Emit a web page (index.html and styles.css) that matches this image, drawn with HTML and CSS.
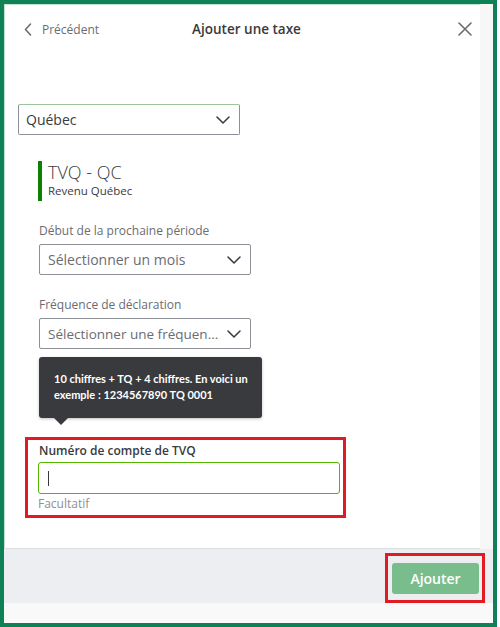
FILE: index.html
```html
<!DOCTYPE html>
<html lang="fr">

<head>
    <meta charset="UTF-8">
    <meta name="viewport" content="width=device-width, initial-scale=1.0">
    <title>Ajouter une taxe</title>

    <link rel="stylesheet" href="styles.css">
</head>

<body>

    <div class="frame">

        <div class="scroll">
            <div class="panel">

                <div class="header">
                    <a href="javascript:;" class="back">
                        <svg width="8" height="13" viewBox="0 0 8 13"><path d="M6.5 1 1.5 6.5 6.5 12" fill="none" stroke="#6b6c72" stroke-width="1.6" stroke-linecap="round" stroke-linejoin="round"/></svg>
                        <span>Précédent</span>
                    </a>
                    <h1>Ajouter une taxe</h1>
                    <a href="javascript:;" class="close">
                        <svg width="14" height="14" viewBox="0 0 14 14"><path d="M1 1 13 13M13 1 1 13" stroke="#6b6c72" stroke-width="1.6" stroke-linecap="round"/></svg>
                    </a>
                </div>

                <div class="select province">
                    <span>Québec</span>
                    <svg width="14" height="8" viewBox="0 0 14 8"><path d="M1 1 7 7 13 1" fill="none" stroke="#393a3d" stroke-width="1.5" stroke-linecap="round" stroke-linejoin="round"/></svg>
                </div>

                <div class="section">

                    <div class="agency">
                        <div class="agency-name">TVQ - QC</div>
                        <div class="agency-sub">Revenu Québec</div>
                    </div>

                    <div class="field">
                        <label>Début de la prochaine période</label>
                        <div class="select">
                            <span class="placeholder">Sélectionner un mois</span>
                            <svg width="14" height="8" viewBox="0 0 14 8"><path d="M1 1 7 7 13 1" fill="none" stroke="#393a3d" stroke-width="1.5" stroke-linecap="round" stroke-linejoin="round"/></svg>
                        </div>
                    </div>

                    <div class="field">
                        <label>Fréquence de déclaration</label>
                        <div class="select">
                            <span class="placeholder">Sélectionner une fréquen…</span>
                            <svg width="14" height="8" viewBox="0 0 14 8"><path d="M1 1 7 7 13 1" fill="none" stroke="#393a3d" stroke-width="1.5" stroke-linecap="round" stroke-linejoin="round"/></svg>
                        </div>
                    </div>

                </div>

                <div class="highlight account">
                    <div class="tooltip">10 chiffres + TQ + 4 chiffres. En voici un exemple : 1234567890 TQ 0001</div>
                    <label class="strong">Numéro de compte de TVQ</label>
                    <div class="input"><span class="caret"></span></div>
                    <div class="hint">Facultatif</div>
                </div>

            </div>
            <div class="track"></div>
        </div>

        <div class="footer">
            <div class="highlight btn-box">
                <button>Ajouter</button>
            </div>
        </div>

        <div class="bottom"></div>

    </div>

</body>

</html>
```

FILE: styles.css
```css
* {
    margin: 0;
    padding: 0;
    box-sizing: border-box;
}

body {
    background-color: white;
    font-family: "Open Sans", "Lato", sans-serif;
    color: #393a3d;
}

.frame {
    display: flex;
    flex-direction: column;
    width: 497px;
    height: 627px;
    border: 4px solid #0e8256;
    box-shadow: inset 0 0 0 1px #bfe3d1;
}

.scroll {
    display: flex;
    height: 545px;
}

.panel {
    width: 476px;
    border-bottom: 1px solid #dcdde0;
}

.track {
    flex: 1;
    background-color: #f7f7f8;
}

.header {
    display: flex;
    align-items: center;
    justify-content: space-between;
    height: 50px;
    padding: 0 8px 0 20px;
}

.back {
    display: flex;
    align-items: center;
    width: 140px;
    text-decoration: none;
    font-size: 12px;
    color: #6b6c72;
}

.back svg {
    margin-right: 10px;
}

.header h1 {
    font-size: 13.5px;
    font-weight: 600;
    color: #393a3d;
    margin-right: 3px;
}

.close {
    display: flex;
    justify-content: flex-end;
    width: 140px;
}

.select {
    display: flex;
    align-items: center;
    justify-content: space-between;
    width: 212px;
    height: 31px;
    padding: 0 9px 0 8px;
    border: 1px solid #8d9096;
    border-radius: 2px;
    font-size: 14px;
}

.select .placeholder {
    color: #6b6c72;
    white-space: nowrap;
    margin-right: 6px;
}

.field + .field .placeholder {
    font-size: 13.5px;
}

.province {
    width: 222px;
    margin: 50px 0 0 14px;
    padding-left: 7px;
    border-top-color: #9cc59a;
}

.section {
    padding-left: 34px;
}

.agency {
    margin-top: 26px;
    padding-left: 6px;
    border-left: 4px solid #108000;
    height: 40px;
}

.agency-name {
    font-size: 18px;
    font-weight: 300;
    line-height: 22px;
    margin-top: 1px;
}

.agency-sub {
    font-size: 11.5px;
    line-height: 16px;
}

.field label {
    display: block;
    font-size: 12px;
    color: #6b6c72;
    line-height: 16px;
    margin: 22px 0 5px 1px;
}

.field .select {
    margin-left: 1px;
}

.highlight {
    border: 3px solid #e21b23;
}

.account {
    position: relative;
    width: 321px;
    margin: 88px 0 0 21px;
    padding: 3px 3px 3px 10px;
}

.tooltip {
    position: absolute;
    left: 11px;
    bottom: 100%;
    margin-bottom: 22px;
    width: 223px;
    padding: 14px 14px 15px 15px;
    background-color: #393a3d;
    border-radius: 3px;
    color: white;
    font-family: "Lato", sans-serif;
    font-size: 11px;
    font-weight: 700;
    line-height: 16px;
    box-shadow: 0 1px 3px rgba(0, 0, 0, .25);
}

.tooltip::after {
    content: "";
    position: absolute;
    left: 15px;
    top: 100%;
    border: 7px solid transparent;
    border-top-color: #393a3d;
    border-bottom: 0;
}

.account .strong {
    display: block;
    font-size: 12px;
    font-weight: 600;
    line-height: 16px;
    color: #393a3d;
    margin-left: 1px;
}

.input {
    display: flex;
    align-items: center;
    width: 302px;
    height: 32px;
    margin-top: 3px;
    padding-left: 9px;
    border: 1px solid #53b700;
    border-radius: 3px;
}

.caret {
    width: 1px;
    height: 15px;
    background-color: #393a3d;
}

.hint {
    font-size: 12px;
    line-height: 16px;
    color: #8d9096;
    margin-top: 2px;
}

.footer {
    display: flex;
    justify-content: flex-end;
    align-items: flex-end;
    height: 54px;
    padding: 0 8px 0 0;
    background-color: #eceef1;
}

.btn-box {
    width: 100px;
    height: 50px;
    padding: 7px 3px 6px 4px;
}

.btn-box button {
    width: 87px;
    height: 31px;
    border: 0;
    border-radius: 3px;
    background-color: #7abd8c;
    color: white;
    font-family: "Open Sans", sans-serif;
    font-size: 14px;
    font-weight: 600;
}

.bottom {
    flex: 1;
    background-color: #f9f9fa;
}
```
